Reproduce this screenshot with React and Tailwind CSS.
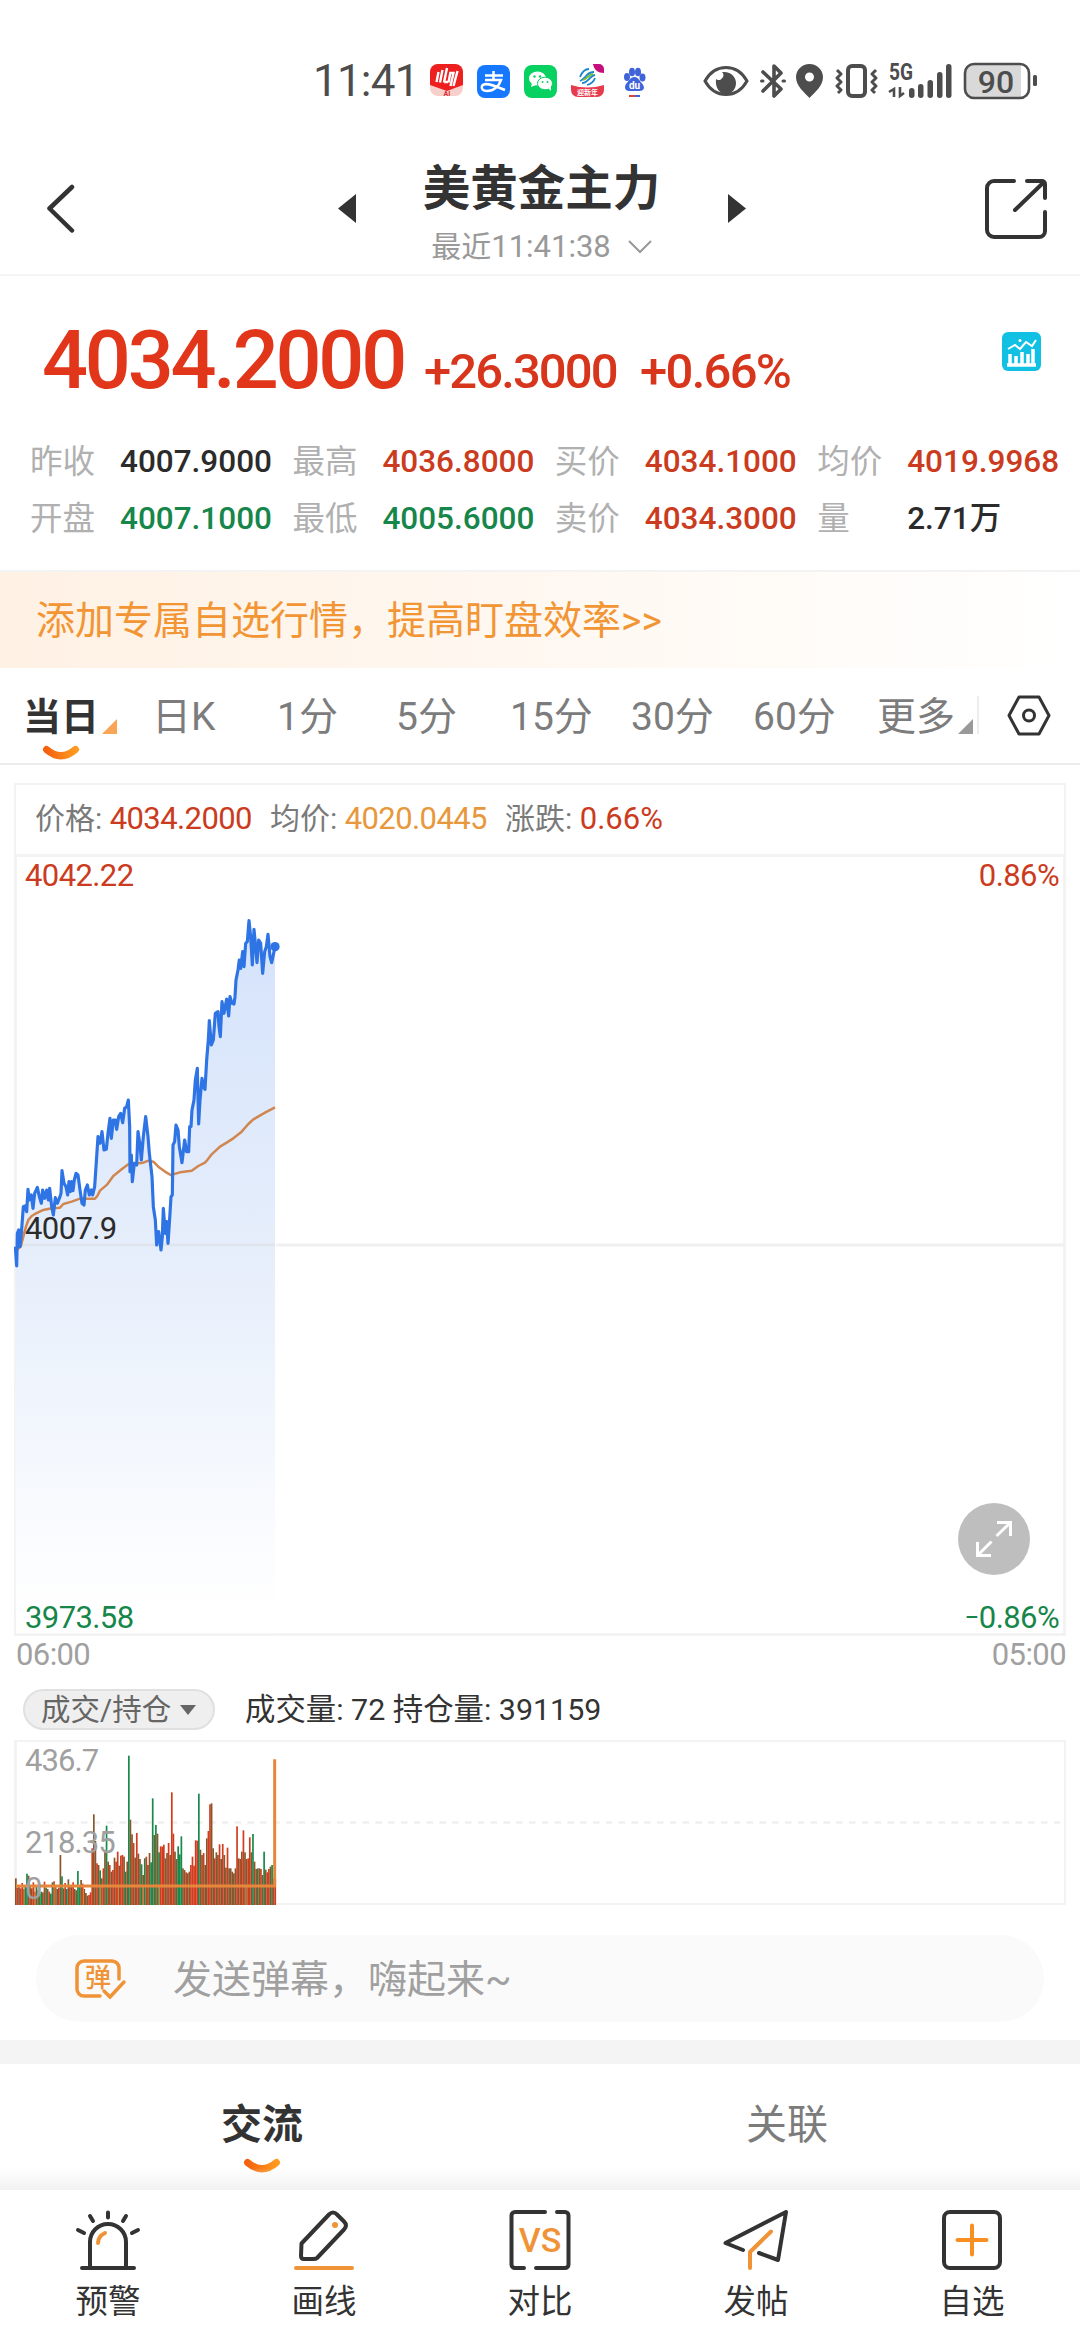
import React, { useState } from 'react';

const QUOTES = [
  [
    { label: '昨收', value: '4007.9000', color: 'text-[#2b2b2b]' },
    { label: '最高', value: '4036.8000', color: 'text-[#cb3b20]' },
    { label: '买价', value: '4034.1000', color: 'text-[#cb3b20]' },
    { label: '均价', value: '4019.9968', color: 'text-[#cb3b20]' },
  ],
  [
    { label: '开盘', value: '4007.1000', color: 'text-[#16864a]' },
    { label: '最低', value: '4005.6000', color: 'text-[#16864a]' },
    { label: '卖价', value: '4034.3000', color: 'text-[#cb3b20]' },
    { label: '量', value: '2.71万', color: 'text-[#2b2b2b]' },
  ],
];

const PERIODS = [
  { label: '当日', width: 'w-[129px]', corner: true },
  { label: '日K', width: 'w-[125px]' },
  { label: '1分', width: 'w-[119px]' },
  { label: '5分', width: 'w-[114px]' },
  { label: '15分', width: 'w-[121px]' },
  { label: '30分', width: 'w-[122px]' },
  { label: '60分', width: 'w-[124px]' },
  { label: '更多', width: 'w-[122px]', corner: true },
];

// x, y pairs in thirds of a pixel, origin at the left edge / y = 900
const PRICE = '46,1040 50,1098 52,1000 56,990 60,1040 64,1000 70,920 75,918 80,935 84,868 88,900 94,885 99,925 104,880 112,862 118,890 124,910 128,870 134,895 140,870 145,900 149,865 155,920 160,945 166,893 172,910 180,890 183,880 186,812 192,850 198,860 203,885 207,845 211,875 215,845 219,872 223,840 228,820 234,825 240,870 246,910 252,915 256,870 262,855 268,885 274,870 278,885 284,860 288,800 294,710 300,730 306,695 312,750 319,748 324,700 330,655 334,715 340,660 346,660 350,688 356,650 362,640 368,668 374,625 380,620 385,600 389,680 390,815 394,765 397,845 403,790 410,795 414,695 420,735 424,780 430,710 437,650 444,710 448,760 456,830 460,920 466,960 470,1035 476,995 483,1050 487,1010 490,925 496,1000 500,965 504,1030 510,940 513,890 517,885 519,735 524,725 528,675 534,690 538,740 546,788 554,720 560,755 566,755 569,680 573,680 576,630 582,600 586,540 592,505 596,672 600,600 606,535 610,560 615,568 620,480 625,420 628,362 634,435 640,420 646,340 654,335 657,380 661,410 666,305 672,340 680,297 686,348 690,290 696,310 702,312 705,290 708,240 714,210 718,180 722,205 728,155 732,200 737,130 742,125 747,62 752,110 757,195 762,88 766,130 771,188 776,120 782,130 788,220 794,155 799,140 804,103 810,170 815,188 820,165 825,140';

const AVERAGE = '50,1050 62,1040 70,1010 78,980 85,960 95,948 105,942 130,930 155,925 180,923 190,912 215,905 240,896 285,896 292,888 300,872 322,853 340,828 365,808 385,793 430,788 445,782 460,785 475,800 500,818 512,825 540,817 575,812 595,798 615,788 622,780 635,763 660,740 680,728 700,715 725,695 745,672 760,658 795,638 825,622';

// bar heights in thirds of a pixel; r = up, g = down, b = both
const VOLUME = 'b80 r52 b60 r50 r66 b48 g58 g94 b88 r60 b50 r68 r40 g56 r45 g34 g40 b38 r70 g52 b48 r40 g34 g68 r71 b56 b48 r52 b150 g86 b50 r66 g48 b77 r60 b54 r68 b48 b44 g102 g60 b75 r64 b48 b36 b28 r30 r38 r170 b272 b192 r125 b120 g104 b80 r110 b165 g238 b130 r120 b100 r105 b142 r130 r160 b118 r148 r150 b145 g100 b130 g448 b256 b212 r186 b142 r216 b154 b138 g122 b90 g140 r145 b120 b156 g128 g320 b210 g240 b214 g158 r176 r175 r181 b140 b156 r186 b150 r338 r214 b160 b138 g176 g152 g206 b110 b105 r98 b95 b100 r120 r145 r118 r194 r193 g334 b166 b150 r156 b120 b200 r222 r302 b305 b170 r140 b158 b150 r182 b138 r183 b150 b112 r172 b110 b110 b100 b95 b110 r236 b140 r138 b160 r224 b158 b138 r140 r203 b158 g213 b130 r108 g110 b110 r108 b90 g160 b106 r98 r108 b115 g120 r80 r78';

const VOLUME_COLORS = { r: '#d23c1e', g: '#17894a', b: '#87562b' };

function StatusBar() {
  return (
    <div className="h-[108px] pt-[54px] pl-[313px] flex items-center text-[#4d4d4d] shrink-0">
      <span className="text-[44px] leading-none tracking-[-0.8px] w-[117px]">11:41</span>
      <div className="flex items-center gap-[14px]">
        <svg width="33" height="34" viewBox="0 0 33 34">
          <rect width="33" height="32" rx="8" fill="#f7cfcb" />
          <path d="M0 8a8 8 0 0 1 8-8h17a8 8 0 0 1 8 8v13L17 27 0 21z" fill="#ee1f1f" />
          <path d="M8.500 8L6.500 18M12.500 6l-2.500 12.500M17 4l-3 14.500M14 18h4M20.500 8l-2 10.500M20 9h3.500l-3 13M27.500 7l-4 15" stroke="#fff" strokeWidth="2.400" fill="none" />
          <text x="17" y="31.500" fontSize="7" fontWeight="700" textAnchor="middle" fill="#d92b2b">AI</text>
        </svg>
        <svg width="33" height="33" viewBox="0 0 33 33">
          <rect width="33" height="33" rx="8" fill="#1677ff" />
          <path d="M8 10.500h18M16.500 6v9M8 15h16c-2 6-7 11-14 11-4 0-6-2-5-5 2-4 9-2 23 4" stroke="#fff" strokeWidth="2.500" fill="none" />
        </svg>
        <svg width="33" height="33" viewBox="0 0 33 33">
          <rect width="33" height="33" rx="8" fill="#07d160" />
          <ellipse cx="13.500" cy="13.500" rx="8.500" ry="7" fill="#fff" />
          <path d="M8 18l-1 4 5-2z" fill="#fff" />
          <ellipse cx="21" cy="18.500" rx="7.500" ry="6.300" fill="#fff" stroke="#07d160" strokeWidth="1" />
          <path d="M24 23l3 3v-5z" fill="#fff" />
          <g fill="#07d160">
            <circle cx="10.500" cy="11.500" r="1.200" />
            <circle cx="16" cy="11.500" r="1.200" />
            <circle cx="18.500" cy="17" r="1" />
            <circle cx="23.500" cy="17" r="1" />
          </g>
        </svg>
        <svg width="33" height="34" viewBox="0 0 33 34">
          <path d="M22 0h6a5 5 0 0 1 5 5v4c-6 0-10-3-11-9z" fill="#c40f7c" />
          <path d="M0 21q16 5 33 0v5a7 7 0 0 1-7 7H7a7 7 0 0 1-7-7z" fill="#e63b4d" />
          <path d="M9 13c2-5 5-8 9-8M9 17c3-1 5-4 7-6s5-3 7-3M11 19c4 0 6-3 8-5s3-3 5-3M16 21c4-1 7-4 8-7" stroke="#1b86c9" strokeWidth="1.800" fill="none" />
          <path d="M12 16c4-1 5-5 10-6" stroke="#7bbf3a" strokeWidth="1.800" fill="none" />
          <text x="16.500" y="31" fontSize="7" fontWeight="700" textAnchor="middle" fill="#fff">迎新年</text>
        </svg>
        <svg width="33" height="34" viewBox="0 0 33 34" fill="#3f63d8">
          <ellipse cx="9" cy="13" rx="3" ry="4" />
          <ellipse cx="14" cy="8" rx="3" ry="4.300" />
          <ellipse cx="20" cy="8" rx="3" ry="4.300" />
          <ellipse cx="24.500" cy="13.500" rx="3" ry="4" />
          <path d="M16.500 13c4 0 5 4 8 7 3 4 1 7-3 7H11c-4 0-5-4-3-7 3-3 4-7 8.500-7z" />
          <text x="16.500" y="25" fontSize="10" fontWeight="700" textAnchor="middle" fill="#fff">du</text>
          <path d="M11 31h6v2h-6z" fill="#d8453a" />
          <path d="M17 31h5v2h-5z" />
        </svg>
      </div>

      <div className="ml-[52px] flex items-center">
        <svg width="46" height="34" viewBox="0 0 46 34">
          <path d="M2 17C12-1 34-1 44 17 34 35 12 35 2 17z" fill="none" stroke="currentColor" strokeWidth="3" />
          <path d="M19 8c3 3 1 6-2 8-2 0-3 0-4-1-1 8 3 15 10 15 6 0 10-5 10-11S28 7 19 8z" fill="currentColor" />
        </svg>
        <svg className="ml-[11px]" width="26" height="36" viewBox="0 0 26 36" fill="none" stroke="currentColor" strokeWidth="3.600" strokeLinejoin="round" strokeLinecap="round">
          <path d="M3 9l18 17-7 7V3l7 7L3 28" />
          <path d="M1.500 18h1.500M23 18h1.500" strokeWidth="3" />
        </svg>
        <svg className="ml-[9px]" width="29" height="36" viewBox="0 0 29 36">
          <path fillRule="evenodd" d="M14.500 1C7 1 1 7 1 14c0 9 8 15 13.500 21C20 29 28 23 28 14 28 7 22 1 14.500 1zm0 8.500a4.500 4.500 0 1 1 0 9 4.500 4.500 0 0 1 0-9z" fill="currentColor" />
        </svg>
        <svg className="ml-[11px]" width="44" height="36" viewBox="0 0 44 36" fill="none" stroke="currentColor">
          <rect x="13" y="3" width="17" height="30" rx="4" strokeWidth="4" />
          <path d="M2 7l4 4-4 4 4 4-4 4 4 4-3 3M41 7l-4 4 4 4-4 4 4 4-4 4 3 3" strokeWidth="3" strokeLinejoin="round" />
        </svg>
        <svg className="ml-[10px] overflow-visible" width="64" height="36" viewBox="0 0 64 36" fill="currentColor">
          <text x="0" y="17" fontSize="23" fontWeight="700" textLength="24" lengthAdjust="spacingAndGlyphs">5G</text>
          <path d="M5 34V26L0 29M11 24v9l4-3" fill="none" stroke="currentColor" strokeWidth="2.600" />
          <rect x="20" y="25" width="5.500" height="10" rx="2.700" />
          <rect x="29" y="21" width="5.500" height="14" rx="2.700" />
          <rect x="38.500" y="17" width="5.500" height="18" rx="2.700" />
          <rect x="48" y="9" width="5.500" height="26" rx="2.700" />
          <rect x="57" y="1" width="5.500" height="34" rx="2.700" />
        </svg>
        <svg className="ml-[10px] overflow-visible" width="75" height="38" viewBox="0 0 75 38">
          <path d="M10 3h48v32H10a7 7 0 0 1-7-7V10a7 7 0 0 1 7-7z" fill="#d9d9d9" />
          <rect x="2" y="2" width="64" height="34" rx="9" fill="none" stroke="currentColor" strokeWidth="2.600" />
          <rect x="70" y="13" width="4" height="11" rx="1.500" fill="currentColor" />
          <text x="33" y="30.500" fontSize="32" fontWeight="500" textAnchor="middle" fill="currentColor">90</text>
        </svg>
      </div>
    </div>
  );
}

function Header() {
  return (
    <div className="h-[168px] border-b-2 border-[#f5f5f5] flex items-start justify-between pl-[45px] pr-[32px] shrink-0">
      <svg className="mt-[75px]" width="30" height="52" viewBox="0 0 30 52" fill="none" stroke="#333" strokeWidth="4.500" strokeLinecap="round" strokeLinejoin="round">
        <path d="M27 4L4.500 25.500 27 47.500" />
      </svg>
      <div className="flex items-start ml-[24px]">
        <svg className="mt-[86px]" width="18" height="29" viewBox="0 0 18 29"><path d="M18 0v29L0 14.500z" fill="#333" /></svg>
        <div className="w-[372px] flex flex-col items-center">
          <div className="mt-[56px] text-[47.500px] leading-[50px] font-bold text-[#333]">美黄金主力</div>
          <div className="mt-[13px] flex items-center text-[30px] leading-[40px] text-[#999]">
            <span>最近<span className="text-[31px]">11:41:38</span></span>
            <svg className="ml-[17px]" width="24" height="14" viewBox="0 0 24 14" fill="none" stroke="#999" strokeWidth="2"><path d="M1 1l11 11L23 1" /></svg>
          </div>
        </div>
        <svg className="mt-[86px]" width="18" height="29" viewBox="0 0 18 29"><path d="M0 0v29l18-14.500z" fill="#333" /></svg>
      </div>
      <svg className="mt-[70px]" width="64" height="62" viewBox="0 0 64 62" fill="none" stroke="#333" strokeWidth="4" strokeLinecap="round" strokeLinejoin="round">
        <path d="M30 3H10a7 7 0 0 0-7 7v42a7 7 0 0 0 7 7h45a6 6 0 0 0 6-6V34M43 3h15a3 3 0 0 1 3 3v14M60 4L31 32" />
      </svg>
    </div>
  );
}

function Quote() {
  return (
    <div className="h-[294px] shrink-0 text-[#d8361c]">
      <div className="flex items-baseline pl-[42px] pt-[40px] font-medium relative">
        <span className="text-[81px] leading-[90px] tracking-[-3.2px] w-[382px] text-[#e2361a]">4034.2000</span>
        <span className="text-[49px] tracking-[-1.9px] w-[216px]">+26.3000</span>
        <span className="text-[49px] tracking-[-1.7px]">+0.66%</span>
        <svg className="absolute left-[1002px] top-[56px]" width="39" height="39" viewBox="0 0 39 39">
          <rect width="39" height="39" rx="6" fill="#12c0e4" />
          <path d="M6 17l7-4 5 4 6-7 6 4 4-6" stroke="#fff" strokeWidth="2" fill="none" />
          <path d="M8 33V22M14 33v-9M20 33V20M26 33V22M31 33V17M5 33h29" stroke="#fff" strokeWidth="3.500" />
          <circle cx="18" cy="8.500" r="1.500" fill="#fff" />
        </svg>
      </div>
      <div className="mt-[25px]">
        {QUOTES.map((row, i) => (
          <div key={i} className="flex h-[57px] pl-[30px]">
            {row.map((q) => (
              <div key={q.label} className="w-[262.400px] shrink-0 flex items-center">
                <span className="w-[90px] text-[32.500px] text-[#b0b0b0]">{q.label}</span>
                <span className={`text-[31.500px] font-medium ${q.color}`}>{q.value}</span>
              </div>
            ))}
          </div>
        ))}
      </div>
    </div>
  );
}

function Smile() {
  return (
    <svg width="38" height="16" viewBox="0 0 38 16">
      <defs>
        <linearGradient id="smile">
          <stop offset="0" stopColor="#f4620f" />
          <stop offset="1" stopColor="#ff9a1f" />
        </linearGradient>
      </defs>
      <path d="M4.500 4.500Q19 17 33.500 4.500" fill="none" stroke="url(#smile)" strokeWidth="7" strokeLinecap="round" />
    </svg>
  );
}

function Periods({ active, onChange }) {
  return (
    <div className="h-[97px] border-b-2 border-[#ebebeb] flex items-start pl-[23px] shrink-0">
      {PERIODS.map((p) => {
        const on = p.label === active;
        return (
          <button key={p.label} onClick={() => onChange(p.label)} className={`${p.width} shrink-0 pt-[23px]`}>
            <span className={`flex items-end h-[52px] leading-[52px] whitespace-nowrap ${on ? 'text-[38px] font-bold text-[#333]' : 'text-[39px] text-[#7c7c7c]'}`}>
              {p.label}
              {p.corner && (
                <svg className="ml-[3px] mb-[9px]" width="15" height="15" viewBox="0 0 15 15">
                  <path d="M15 0v15H0z" fill={on ? '#faa556' : '#999'} />
                </svg>
              )}
            </span>
            {on && <span className="block pl-[19px] mt-[2px]"><Smile /></span>}
          </button>
        );
      })}
      <div className="h-[38px] mt-[28px] -ml-[22px] border-l-2 border-[#ececec]" />
      <svg className="ml-[28px] mt-[27px]" width="44" height="41" viewBox="0 0 44 41" fill="none" stroke="#333" strokeWidth="3">
        <path d="M12 2h20l10 18.500L32 39H12L2 20.500z" strokeLinejoin="round" />
        <circle cx="22" cy="20.500" r="5.500" />
      </svg>
    </div>
  );
}

function PriceChart() {
  return (
    <div className="relative h-[782px] border-[3px] border-[#f3f3f3] text-[31px] leading-none tracking-[-0.6px]">
      <svg className="absolute -left-[3px] -top-[3px]" width="1052" height="782" viewBox="14 854 1052 782" fill="none">
        <defs>
          <linearGradient id="area" gradientUnits="userSpaceOnUse" x1="0" y1="0" x2="0" y2="2130">
            <stop offset="0" stopColor="#d3e2fb" />
            <stop offset="0.500" stopColor="#e6eefb" />
            <stop offset="1" stopColor="#fff" />
          </linearGradient>
        </defs>
        <path d="M276 1245H1064" stroke="#f0f0f0" strokeWidth="3" />
        <g transform="translate(0 900) scale(0.33333)">
          <polygon points={`48,2200 ${PRICE} 825,2200`} fill="url(#area)" />
          <path d="M48 1035H825" stroke="#dfe4ec" strokeWidth="8" />
          <polyline points={AVERAGE} stroke="#d08650" strokeWidth="7.500" strokeLinejoin="round" />
          <polyline points={PRICE} stroke="#2f74e4" strokeWidth="9.500" strokeLinejoin="round" />
          <circle cx="825" cy="140" r="14" fill="#2f74e4" />
        </g>
      </svg>
      <div className="absolute left-[8px] top-[3px] text-[#cb3b20]">4042.22</div>
      <div className="absolute right-[4px] top-[3px] text-[#cb3b20]">0.86%</div>
      <div className="absolute left-[8px] top-[356px] text-[#2b2b2b]">4007.9</div>
      <div className="absolute left-[8px] bottom-0 text-[#16864a]">3973.58</div>
      <div className="absolute right-[4px] bottom-0 flex text-[#16864a]"><span className="text-[26px] leading-[31px]">−</span>0.86%</div>
      <button className="absolute right-[33px] bottom-[58px] size-[72px] rounded-full bg-[#bebebe]">
        <svg width="72" height="72" viewBox="0 0 72 72" fill="none" stroke="#fff" strokeWidth="3">
          <path d="M39 19.500h13.500V33M52 20L38.500 33M19.500 39v13.500H33M20 52l13.500-13.500" />
        </svg>
      </button>
    </div>
  );
}

function VolumeChart() {
  return (
    <div className="relative h-[165px] border-2 border-l-[3px] border-[#f3f3f3] text-[31px] leading-none tracking-[-0.9px] text-[#a0a0a0]">
      <svg className="absolute -left-[3px] -top-[2px]" width="1052" height="166" viewBox="14 1740 1052 166" fill="none">
        <path d="M17 1822.500H1064" stroke="#efefef" strokeWidth="2.500" strokeDasharray="6.500 6.300" />
        <g transform="translate(0 1735) scale(0.33333)">
          {VOLUME.split(' ').map((bar, i, bars) => {
            const h = Number(bar.slice(1));
            const step = 783 / bars.length;
            return <rect key={i} x={45 + i * step} y={510 - h} width={step + 0.3} height={h} fill={VOLUME_COLORS[bar[0]]} />;
          })}
          {[72, 105, 165, 250, 302, 355, 430, 478, 738].map((x) => (
            <path key={x} d={`M${x} 450V510`} stroke="#e0893e" strokeWidth="3" />
          ))}
          <path d="M48 453H824V73" stroke="#e8873c" strokeWidth="9" />
        </g>
      </svg>
      <div className="absolute left-[8px] top-[3px]">436.7</div>
      <div className="absolute left-[8px] top-[85px]">218.35</div>
      <div className="absolute left-[8px] top-[131px]">0</div>
    </div>
  );
}

const ACTIONS = [
  {
    label: '预警',
    icon: (
      <>
        <path d="M15 58V32a18 18 0 0 1 36 0v26M7 58h52M33 2.500v5M15 6l3 5M51 6l-3 5M3 20l6 3M63 20l-6 3" />
        <path d="M23 33c0-5 3-8 7-10" stroke="#f09337" />
      </>
    ),
  },
  {
    label: '画线',
    icon: (
      <>
        <path d="M10.500 33.500L38 4.500q4-4 8 0l7 7q4 4 0 8L26 48q-1 1-4 1H13q-3 0-3-3z" />
        <path d="M5 58h56" stroke="#f09337" />
        <circle cx="44" cy="15" r="3" fill="#f09337" stroke="none" />
      </>
    ),
  },
  {
    label: '对比',
    icon: (
      <>
        <path d="M38 2H8a3.500 3.500 0 0 0-3.500 3.500v49A3.500 3.500 0 0 0 8 58h9M29 58h29a3.500 3.500 0 0 0 3.500-3.500v-49A3.500 3.500 0 0 0 58 2h-8" />
        <text x="33" y="42" fontSize="34" fontWeight="500" textAnchor="middle" fill="#f09337" stroke="none">VS</text>
      </>
    ),
  },
  {
    label: '发帖',
    icon: (
      <>
        <path d="M20 40L2.500 33 63 2 55 50 36 43" />
        <path d="M48 21.500L27 42v16" stroke="#f09337" />
      </>
    ),
  },
  {
    label: '自选',
    icon: (
      <>
        <rect x="5" y="2" width="56" height="56" rx="6" />
        <path d="M33 15.500v29M18.500 30h29" stroke="#f98f22" />
      </>
    ),
  },
];

export default function App() {
  const [period, setPeriod] = useState('当日');

  return (
    <div className="w-[1080px] h-[2340px] bg-white overflow-hidden flex flex-col font-['Roboto','Noto_Sans_CJK_SC',sans-serif]">
      <StatusBar />
      <Header />
      <Quote />

      {/* Promo banner */}
      <div className="h-[98px] shrink-0 border-t-2 border-[#f3f3f3] bg-linear-to-r from-[#fff1e4] via-[#fff8f1] to-white pl-[36px] pt-[2px] flex items-center text-[39px] text-[#f29534]">
        {'添加专属自选行情\uff0c提高盯盘效率>>'}
      </div>

      <Periods active={period} onChange={setPeriod} />

      {/* Intraday chart */}
      <div className="mt-[18px] pl-[14px] pr-[14px] shrink-0">
        <div className="h-[71px] border-2 border-b-0 border-[#f3f3f3] pl-[19px] flex items-center text-[30px] text-[#7a7a7a] whitespace-pre">
          <span className="w-[235px]">价格: <span className="text-[31px] tracking-[-0.6px] text-[#cb3b20]">4034.2000</span></span>
          <span className="w-[235px]">均价: <span className="text-[31px] tracking-[-0.6px] text-[#e8983c]">4020.0445</span></span>
          <span>涨跌: <span className="text-[31px] text-[#cb3b20]">0.66%</span></span>
        </div>
        <PriceChart />
        <div className="h-[36px] flex justify-between items-center pl-[2px] text-[31px] leading-none tracking-[-0.6px] text-[#a0a0a0]">
          <span>06:00</span>
          <span>05:00</span>
        </div>
      </div>

      {/* Volume */}
      <div className="mt-[17px] h-[41px] shrink-0 flex items-center pl-[23px] text-[29.500px]">
        <div className="w-[192px] h-[41px] rounded-full border-2 border-[#e0e0e0] bg-[#efefef] flex items-center pl-[16px] text-[#666]">
          <span className="mt-[1px]">成交/持仓</span>
          <svg className="ml-[9px]" width="16" height="10" viewBox="0 0 16 10"><path d="M0 0h16L8 10z" fill="#666" /></svg>
        </div>
        <span className="ml-[30px] mt-[1px] text-[30.400px] text-[#333]">成交量: 72 持仓量: 391159</span>
      </div>
      <div className="mt-[10px] px-[14px] shrink-0">
        <VolumeChart />
      </div>

      {/* Danmaku input */}
      <div className="mt-[30px] mx-[36px] h-[87px] shrink-0 rounded-full bg-[#fafafa] flex items-center pl-[38px] text-[39px] text-[#a0a0a0]">
        <div className="relative w-[53px] h-[42px] mr-[46px]">
          <svg width="53" height="42" viewBox="0 0 53 42" fill="none" stroke="#f09337" strokeWidth="3.500" strokeLinecap="round">
            <path d="M26 38H10a7 7 0 0 1-7-7V10a7 7 0 0 1 7-7h28a7 7 0 0 1 7 7v11M30 33l6 6 14-15" />
          </svg>
          <span className="absolute left-[11px] top-[6px] text-[26px] leading-[28px] font-medium text-[#f09337]">弹</span>
        </div>
        <span className="mt-[4px]">{'发送弹幕\uff0c嗨起来~'}</span>
      </div>

      <div className="mt-[18px] h-[24px] shrink-0 bg-[#f4f4f4]" />

      {/* Community tabs */}
      <div className="h-[126px] shrink-0 flex relative">
        <div className="w-[524px] pt-[32px] flex flex-col items-center">
          <span className="text-[41px] leading-[58px] font-bold text-[#333]">交流</span>
          <span className="mt-[4px] leading-none"><Smile /></span>
        </div>
        <div className="w-[526px] pt-[32px] text-center text-[41px] leading-[58px] text-[#7c7c7c]">关联</div>
        <div className="absolute bottom-0 inset-x-0 h-[22px] bg-linear-to-b from-transparent to-[#f2f2f2]" />
      </div>

      {/* Bottom actions */}
      <div className="h-[150px] shrink-0 grid grid-cols-5 bg-white pt-[20px]">
        {ACTIONS.map((a) => (
          <button key={a.label} className="flex flex-col items-center text-[32.500px] leading-[46px] text-[#333]">
            <svg width="66" height="60" viewBox="0 0 66 60" fill="none" stroke="#333" strokeWidth="4" strokeLinecap="round" strokeLinejoin="round">
              {a.icon}
            </svg>
            <span className="mt-[9px]">{a.label}</span>
          </button>
        ))}
      </div>
    </div>
  );
}
